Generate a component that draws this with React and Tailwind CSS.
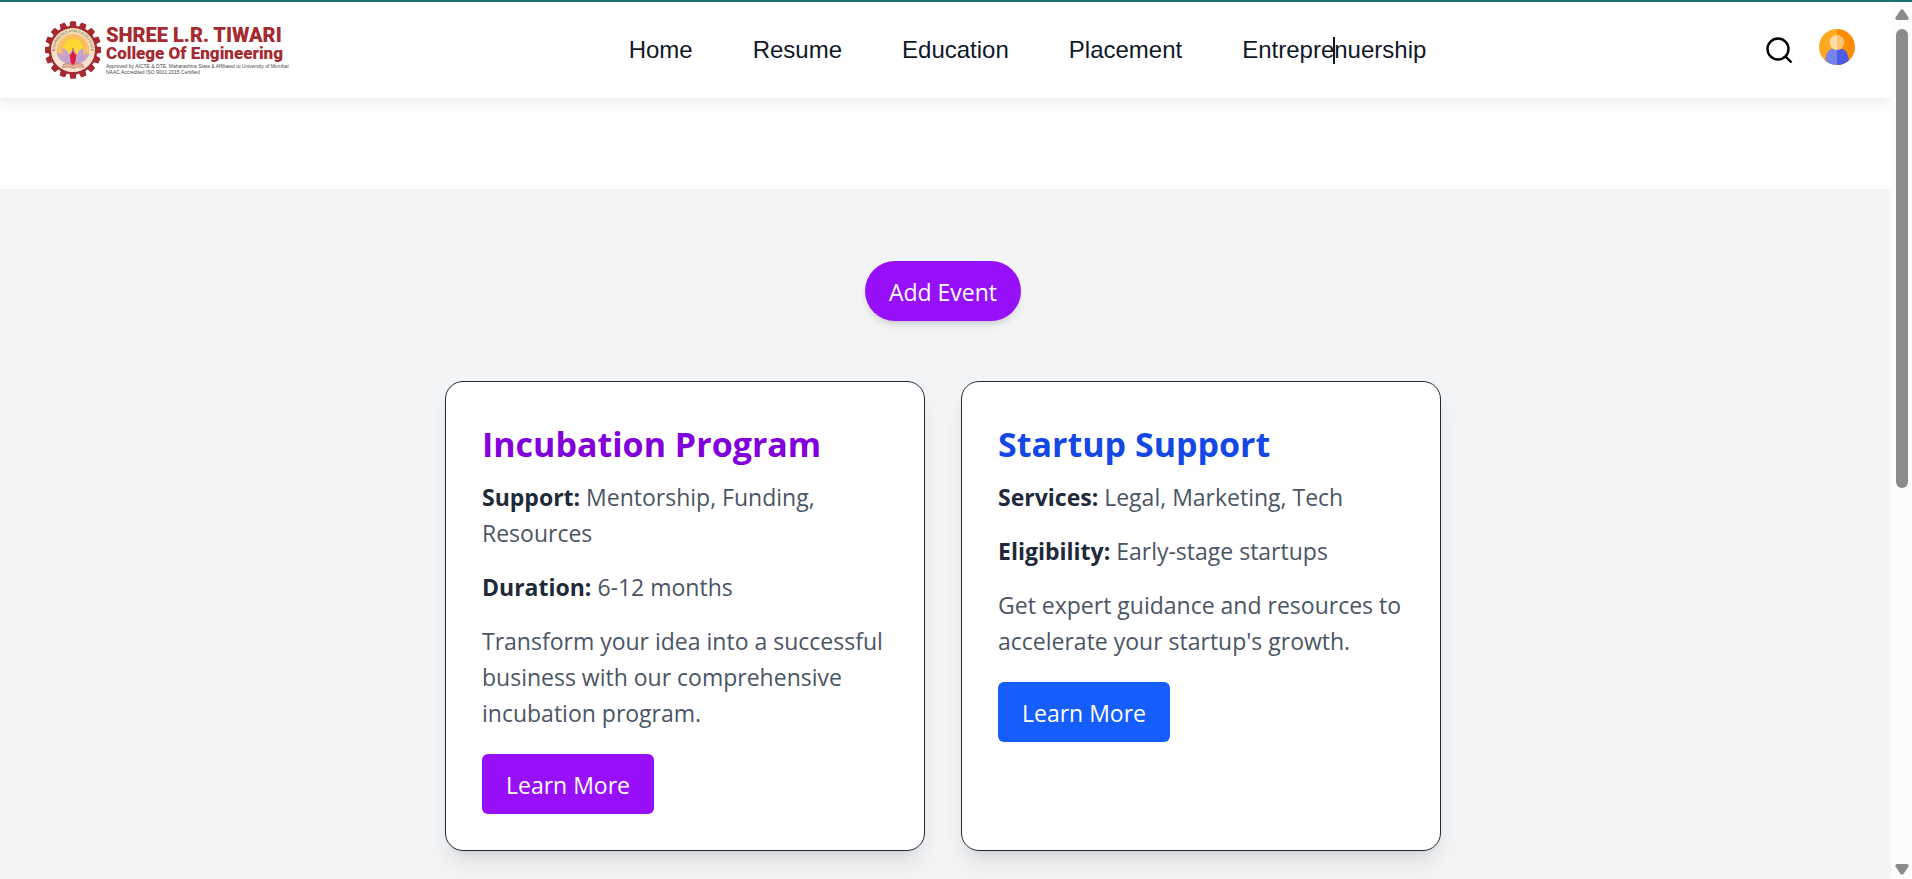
const TEETH = Array.from({ length: 16 }, (_, i) => i * 22.5);

function Emblem() {
  return (
    <svg viewBox="0 0 168 174" className="h-[58px] w-14 shrink-0" aria-hidden="true">
      <g transform="translate(84 87)">
        <g fill="#a52a31">
          {TEETH.map((a) => (
            <path key={a} transform={`rotate(${a})`} d="M-11 -66 L-9 -83 Q-8.500 -86 -6 -86 L6 -86 Q8.500 -86 9 -83 L11 -66Z" />
          ))}
          <circle r="73" />
        </g>
        <circle r="66" fill="#f3e2bb" />
        <circle r="49" cy="0" fill="#f8c27a" />
        <circle r="41" cy="-2" fill="#fbbf55" />
        <circle r="31" cy="-3" fill="#fdd835" />
        <path d="M-62 20 Q-40 16 0 20 Q40 16 62 20 A65 65 0 0 1 -62 20Z" fill="#f6e3cf" />
        <g fill="#c3a3cd">
          <path d="M0 42 Q-44 40 -49 8 Q-38 8 -31 16 Q-34 4 -30 -6 Q-16 0 -12 16 Q-8 24 0 42Z" />
          <path d="M0 42 Q44 40 49 8 Q38 8 31 16 Q34 4 30 -6 Q16 0 12 16 Q8 24 0 42Z" />
          <path d="M-11 36 Q-18 12 0 -4 Q18 12 11 36Z" fill="#d3a9c6" />
        </g>
        <path d="M0 4 L10 16 L7 38 L0 46 L-7 38 L-10 16Z" fill="#d9214c" />
        <path d="M0 -6 V22" stroke="#a52a31" strokeWidth="2.500" />
        <path d="M-28 42 Q-12 38 0 46 Q12 38 28 42 L32 52 Q12 48 0 55 Q-12 48 -32 52Z" fill="#e9b7a0" stroke="#b5655a" strokeWidth="2" />
        <path id="motto" d="M-53 14 A54.500 54.500 0 1 1 53 14" fill="none" />
        <text fill="#6b5a45" fontSize="11" fontFamily="Liberation Sans, sans-serif" textAnchor="middle">
          <textPath href="#motto" startOffset="50%">ENGINEERED FOR EXCELLENCE</textPath>
        </text>
      </g>
    </svg>
  );
}

function Logo() {
  return (
    <a href="#home" className="flex w-[244px] items-center gap-[5px] whitespace-nowrap">
      <Emblem />
      <span className="flex flex-col">
        <span className="font-[Roboto,sans-serif] text-[20px] leading-[20px] font-black text-[#a52a31]">
          SHREE L.R. TIWARI
        </span>
        <span className="font-[Roboto,sans-serif] text-[17px] leading-[17px] font-black text-[#a52a31]">
          College Of Engineering
        </span>
        <span className="mt-px text-[5px] leading-[6px] text-[#4b4b4b]">
          Approved by AICTE &amp; DTE, Maharashtra State &amp; Affiliated to University of Mumbai
        </span>
        <span className="text-[5px] leading-[6px] text-[#4b4b4b]">NAAC Accredited ISO 9001:2015 Certified</span>
      </span>
    </a>
  );
}

function Avatar() {
  return (
    <svg viewBox="0 0 36 36" className="size-9" aria-hidden="true">
      <defs>
        <clipPath id="disc"><circle cx="18" cy="18" r="18" /></clipPath>
      </defs>
      <g clipPath="url(#disc)">
        <rect width="18" height="36" fill="#ffa920" />
        <rect x="18" width="18" height="36" fill="#ff8b00" />
        <path d="M18 20 H12 C8 22 6 27 6 36 H18Z" fill="#7984eb" />
        <path d="M18 20 H24 C28 22 30 27 30 36 H18Z" fill="#4d5ce6" />
        <path d="M18 6 A7.500 7.500 0 0 0 18 21Z" fill="#ffdba6" />
        <path d="M18 6 A7.500 7.500 0 0 1 18 21Z" fill="#ffc473" />
      </g>
    </svg>
  );
}

function Header() {
  return (
    <header className="relative z-10 flex h-24 items-center justify-between bg-white pr-9 pl-[45px] font-['Liberation_Sans',Arial,sans-serif] shadow-[0_3px_15px_rgba(0,0,0,0.1)]">
      <Logo />
      <nav className="flex items-center gap-[60px] text-2xl text-[#101828]">
        <a href="#home">Home</a>
        <a href="#resume">Resume</a>
        <a href="#education">Education</a>
        <a href="#placement">Placement</a>
        <a href="#entrepreneurship" className="relative">
          Entreprenuership
          <span className="absolute top-[3px] left-[91px] h-[27px] w-0.5 bg-[#101828]" />
        </a>
      </nav>
      <div className="flex items-center gap-[26px]">
        <button type="button" aria-label="Search">
          <svg viewBox="0 0 27 27" className="size-[27px]" fill="none" stroke="#000" strokeWidth="2.400">
            <circle cx="12" cy="12" r="10.500" />
            <path d="M19 19 L25.500 25.500" />
          </svg>
        </button>
        <button type="button" aria-label="Account" className="pb-1.5">
          <Avatar />
        </button>
      </div>
    </header>
  );
}

function Card({ title, titleClass, buttonClass, facts, text }) {
  return (
    <article className="flex flex-1 flex-col items-start rounded-[18px] border border-[#1e2939] bg-white p-9 shadow-[0_15px_23px_-5px_rgba(0,0,0,0.1),0_6px_9px_-6px_rgba(0,0,0,0.1)]">
      <h2 className={`mt-0.5 text-[34px] leading-[48px] font-bold ${titleClass}`}>{title}</h2>
      <div className="mt-[11px] flex flex-col gap-[18px]">
        {facts.map(([label, value]) => (
          <p key={label}>
            <strong className="font-bold text-[#1e2939]">{label}:</strong> {value}
          </p>
        ))}
        <p>{text}</p>
      </div>
      <button type="button" className={`mt-[23px] h-[60px] rounded-md px-6 pt-0.5 text-white ${buttonClass}`}>
        Learn More
      </button>
    </article>
  );
}

function Scrollbar() {
  return (
    <div className="flex w-[21px] shrink-0 flex-col items-center bg-[#fcfcfc] pt-[7px] pb-1" aria-hidden="true">
      <svg viewBox="0 0 14 11" className="h-[11px] w-3.5" fill="#8b8b8b">
        <path d="M5.500 1 Q7 -0.500 8.500 1 L13.500 8.500 Q14 11 12 11 H2 Q0 11 0.500 8.500Z" />
      </svg>
      <div className="mt-[9px] h-[459px] w-3 rounded-full bg-[#8b8b8b]" />
      <svg viewBox="0 0 14 11" className="mt-auto h-[11px] w-3.5" fill="#8b8b8b">
        <path d="M5.500 10 Q7 11.500 8.500 10 L13.500 2.500 Q14 0 12 0 H2 Q0 0 0.500 2.500Z" />
      </svg>
    </div>
  );
}

export default function App() {
  return (
    <div className="flex h-screen flex-col overflow-hidden border-t-2 border-[#1d6f74] bg-white">
      <div className="flex min-h-0 flex-1">
        <div className="flex min-w-0 flex-1 flex-col overflow-hidden">
          <Header />
          <main className="mt-[91px] flex flex-1 flex-col items-center bg-gray-100 pt-[72px] pr-[5px] font-['Open_Sans','Noto_Sans',sans-serif] text-[23px] leading-9 text-[#4a5565]">
            <button type="button" className="h-[60px] shrink-0 rounded-full bg-[#980ffa] px-6 pt-0.5 text-white shadow-[0_6px_9px_-2px_rgba(0,0,0,0.1),0_3px_6px_-3px_rgba(0,0,0,0.1)]">
              Add Event
            </button>
            <section className="mt-[60px] flex w-full max-w-[996px] gap-9">
              <Card
                title="Incubation Program"
                titleClass="text-[#8200db]"
                buttonClass="bg-[#980ffa]"
                facts={[["Support", "Mentorship, Funding, Resources"], ["Duration", "6-12 months"]]}
                text="Transform your idea into a successful business with our comprehensive incubation program."
              />
              <Card
                title="Startup Support"
                titleClass="text-[#1447e6]"
                buttonClass="bg-[#155dfc]"
                facts={[["Services", "Legal, Marketing, Tech"], ["Eligibility", "Early-stage startups"]]}
                text="Get expert guidance and resources to accelerate your startup's growth."
              />
            </section>
          </main>
        </div>
        <Scrollbar />
      </div>
    </div>
  );
}
